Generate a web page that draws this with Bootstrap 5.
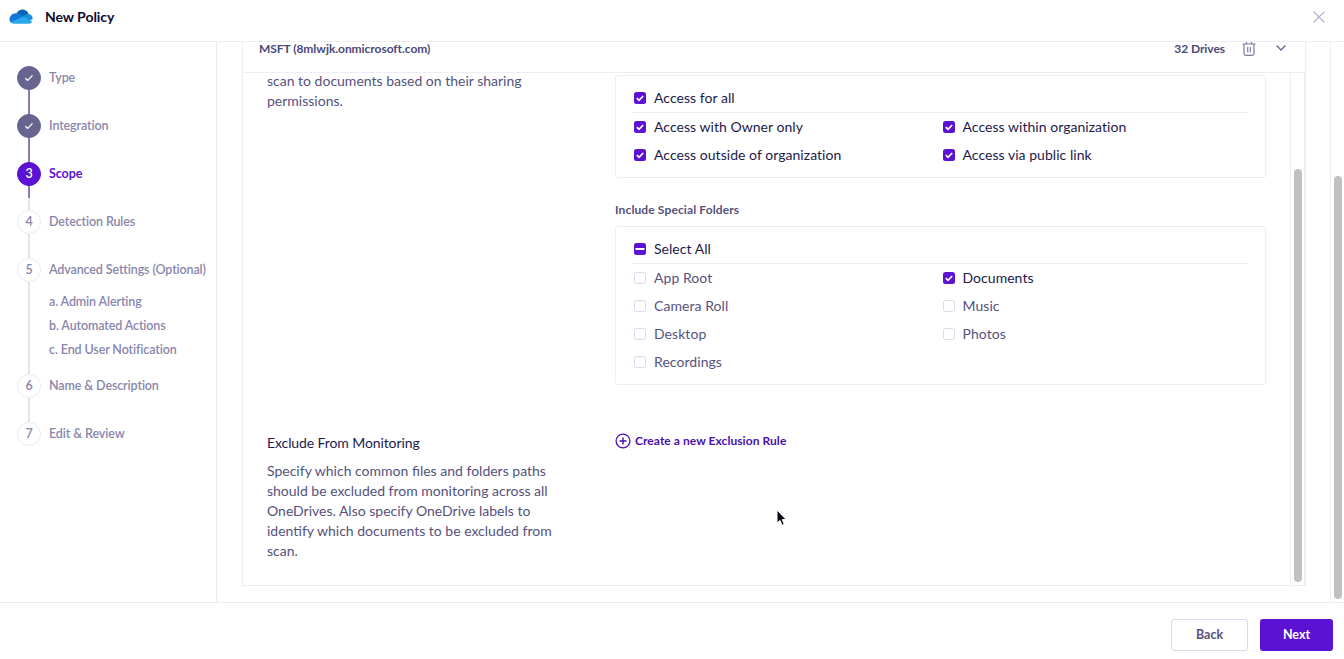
<!DOCTYPE html>
<html lang="en">
<head>
<meta charset="utf-8">
<meta name="viewport" content="width=device-width, initial-scale=1">
<title>New Policy</title>
<link href="https://cdn.jsdelivr.net/npm/bootstrap@5.3.0/dist/css/bootstrap.min.css" rel="stylesheet">
<style>
:root{--brand:#5b12d3;--ink:#1d1a4b;--mid:#55527d;--soft:#8986ab;--line:#ededf2}
body{font-family:Lato,"Liberation Sans",sans-serif;font-size:14px;line-height:20px;color:var(--mid);background:#fff}
.line-c{border-color:var(--line)!important}
.topbar{height:42px;padding:0 18px 7px 9px}
.topbar h1{font-size:14px;line-height:20px;font-weight:700;color:#0e0a33;margin-left:12px;letter-spacing:-.05px}
.side{width:217px;padding:24px 0 0 17px}
.side-in{border-right:1px solid #ececf3}
.rail{width:24px}
.dot{width:24px;height:24px;border-radius:50%;font-size:12.5px;font-weight:600;border:1px solid #ebebf2;color:var(--soft)}
.dot.done{background:#67658f;border-color:#67658f;color:#fff}
.dot.now{background:var(--brand);border-color:var(--brand);color:#fff}
.bar{width:2px;min-height:24px;background:#e2e1ec}
.bar.done{background:#8f78bd}
.bar.half{background:linear-gradient(#8f78bd 50%,#e2e1ec 50%)}
.step{margin-left:8px;font-size:12.5px;line-height:23px;font-weight:600;color:var(--soft);letter-spacing:-.12px;white-space:nowrap}
.step.now{color:var(--brand);font-weight:700;letter-spacing:-.1px}
.subs{padding:9px 0 12px}
.subs li{height:24px}
.pane{padding:0 24px 16px 25px}
.panel{border:1px solid var(--line);border-top:0}
.phead{height:31px;padding:0 16px 18px 16px;font-size:12px;line-height:13px;font-weight:700;color:#4c4978;letter-spacing:-.05px}
.pbody{padding:0 0 0 24px}
.lcol{width:348px}
.lcol p{width:300px;margin:0}
.clip{margin-top:-2px!important}
.ttl{color:var(--ink);letter-spacing:-.1px}
.box{width:651px;border:1px solid var(--line);border-radius:3px;padding:8px 16px 8px}
.box .all{height:29px;border-bottom:1px solid var(--line)}
.opt{height:28px;color:var(--mid);letter-spacing:.06px;padding-left:2px}
.opt.on{color:var(--ink);letter-spacing:.04px}
.cb{width:12px;height:12px;border:1px solid #dcdaea;border-radius:2.5px;margin-right:8px;flex:none}
.opt.on .cb{background:var(--brand);border:0}
.ftitle{font-size:12px;font-weight:700;color:var(--mid);letter-spacing:.12px}
.link-new{color:#4a0fb0;font-size:12px;font-weight:700;letter-spacing:.06px;margin-top:-2px}
.track{width:15px;border:1px solid var(--line);border-width:0 1px;padding:0 0 3px 3px}
.outer{width:14px}
.thumb{width:8px;border-radius:4px;background:#c1c1c1}
.foot{height:57px;border-top:1px solid var(--line);padding:0 11px 8px 0;gap:12px}
.foot .btn{height:32px;padding:0 0 1px;font-size:12.5px;line-height:20px;font-weight:700;border-radius:3px}
.foot .btn-back{width:77px;border:1px solid #d9d8e8;color:var(--mid)}
.btn-next,.btn-next:hover{width:73px;background:var(--brand);color:#fff}
.chev{margin:2px 3px 0 19px}
.pointer{position:absolute;left:773px;top:508px}
</style>
</head>
<body class="vh-100 overflow-hidden d-flex flex-column">
<svg class="d-none"><symbol id="ck" viewBox="0 0 12 12"><path d="M2.800 6.200l2.200 2.100 4.200-4.300" fill="none" stroke="#fff" stroke-width="1.700"/></symbol>
<symbol id="tick" viewBox="0 0 10 10"><path d="M1.400 5.200l2.300 2.200 4.800-5" fill="none" stroke="#fff" stroke-width="1.300"/></symbol></svg>
<header class="topbar d-flex align-items-center border-bottom line-c flex-shrink-0">
<svg width="24" height="16" viewBox="0 0 24 16"><path d="M7.5 4.500C9 1.400 11.400.3 14 .5c2.700.2 4.900 2 5.700 4.700L13 9z" fill="#0364b8"/><path d="M7.300 4.200c2 0 3.200.7 4.700 1.600L18 10 2.500 14C.2 12.700-.1 9.500 1.400 7.200c1.300-2 3.300-3.100 5.900-3z" fill="#0f78d4"/><path d="M14.500 7.500c1.200-1.500 3-2.400 5-2.400 2.500.2 4.200 2.200 4.200 4.900L20 12z" fill="#1490df"/><path d="M1.500 13.100L14.600 7.400l8.600 5.200c-.8 1.500-2 2.200-3.600 2.200H5c-1.500 0-2.700-.6-3.500-1.700z" fill="#28a8ea"/></svg>
<h1 class="mb-0 me-auto">New Policy</h1>
<svg width="14" height="14" viewBox="0 0 14 14"><path d="M1.500 1.500l11 11m0-11l-11 11" stroke="#b9b6d3" stroke-width="1.300" fill="none"/></svg>
</header>
<div class="d-flex flex-grow-1 overflow-hidden">
<nav class="side side-in flex-shrink-0">
<div class="d-flex"><div class="rail d-flex flex-column align-items-center"><div class="dot done d-flex align-items-center justify-content-center"><svg width="10" height="10"><use href="#tick"/></svg></div><div class="bar done flex-grow-1"></div></div><div class="step">Type</div></div>
<div class="d-flex"><div class="rail d-flex flex-column align-items-center"><div class="dot done d-flex align-items-center justify-content-center"><svg width="10" height="10"><use href="#tick"/></svg></div><div class="bar done flex-grow-1"></div></div><div class="step">Integration</div></div>
<div class="d-flex"><div class="rail d-flex flex-column align-items-center"><div class="dot now d-flex align-items-center justify-content-center">3</div><div class="bar half flex-grow-1"></div></div><div class="step now">Scope</div></div>
<div class="d-flex"><div class="rail d-flex flex-column align-items-center"><div class="dot d-flex align-items-center justify-content-center">4</div><div class="bar flex-grow-1"></div></div><div class="step">Detection Rules</div></div>
<div class="d-flex"><div class="rail d-flex flex-column align-items-center"><div class="dot d-flex align-items-center justify-content-center">5</div><div class="bar flex-grow-1"></div></div><div class="step">Advanced Settings (Optional)<ul class="subs list-unstyled mb-0"><li>a. Admin Alerting</li><li>b. Automated Actions</li><li>c. End User Notification</li></ul></div></div>
<div class="d-flex"><div class="rail d-flex flex-column align-items-center"><div class="dot d-flex align-items-center justify-content-center">6</div><div class="bar flex-grow-1"></div></div><div class="step">Name &amp; Description</div></div>
<div class="d-flex"><div class="rail d-flex flex-column align-items-center"><div class="dot d-flex align-items-center justify-content-center">7</div></div><div class="step">Edit &amp; Review</div></div>
</nav>
<main class="pane flex-grow-1 d-flex">
<section class="panel flex-grow-1 d-flex flex-column">
<div class="phead d-flex align-items-start border-bottom line-c flex-shrink-0"><span class="me-auto">MSFT (8mlwjk.onmicrosoft.com)</span><span>32 Drives</span>
<svg class="ms-3" width="16" height="15" viewBox="0 0 16 15"><path d="M1.500 2h13M5.500 1.800V0m5 1.800V0M3 2v9.500q0 1.800 1.800 1.800h6.400q1.800 0 1.800-1.800V2M6.700 4.900v5.400m2.600-5.400v5.400" stroke="#7e7ba3" stroke-width="1.200" fill="none"/></svg>
<svg class="chev" width="10" height="8" viewBox="0 0 10 8"><path d="M.6 1.500L5 6l4.400-4.500" stroke="#68658f" stroke-width="1.300" fill="none"/></svg></div>
<div class="d-flex flex-grow-1 overflow-hidden">
<div class="pbody flex-grow-1">
<div class="d-flex" style="height:360px"><div class="lcol flex-shrink-0"><p class="clip">scan to documents based on their sharing permissions.</p></div>
<div>
<div class="box" style="margin-top:2px;height:103px"><div class="all opt on d-flex align-items-center"><span class="cb d-flex"><svg width="12" height="12"><use href="#ck"/></svg></span>Access for all</div>
<div class="row g-0"><div class="col-6"><div class="opt on d-flex align-items-center"><span class="cb d-flex"><svg width="12" height="12"><use href="#ck"/></svg></span>Access with Owner only</div><div class="opt on d-flex align-items-center"><span class="cb d-flex"><svg width="12" height="12"><use href="#ck"/></svg></span>Access outside of organization</div></div>
<div class="col-6"><div class="opt on d-flex align-items-center"><span class="cb d-flex"><svg width="12" height="12"><use href="#ck"/></svg></span>Access within organization</div><div class="opt on d-flex align-items-center"><span class="cb d-flex"><svg width="12" height="12"><use href="#ck"/></svg></span>Access via public link</div></div></div></div>
<div class="ftitle" style="margin:22px 0 6px">Include Special Folders</div>
<div class="box" style="height:159px"><div class="all opt on d-flex align-items-center"><span class="cb d-flex"><svg width="12" height="12"><path d="M1.500 6h9" stroke="#fff" stroke-width="2"/></svg></span>Select All</div>
<div class="row g-0"><div class="col-6"><div class="opt d-flex align-items-center"><span class="cb"></span>App Root</div><div class="opt d-flex align-items-center"><span class="cb"></span>Camera Roll</div><div class="opt d-flex align-items-center"><span class="cb"></span>Desktop</div><div class="opt d-flex align-items-center"><span class="cb"></span>Recordings</div></div>
<div class="col-6"><div class="opt on d-flex align-items-center"><span class="cb d-flex"><svg width="12" height="12"><use href="#ck"/></svg></span>Documents</div><div class="opt d-flex align-items-center"><span class="cb"></span>Music</div><div class="opt d-flex align-items-center"><span class="cb"></span>Photos</div></div></div></div>
</div></div>
<div class="d-flex"><div class="lcol flex-shrink-0"><div class="ttl mb-2">Exclude From Monitoring</div><p>Specify which common files and folders paths should be excluded from monitoring across all OneDrives. Also specify OneDrive labels to identify which documents to be excluded from scan.</p></div>
<a href="#" class="link-new d-flex align-items-center align-self-start text-decoration-none"><svg width="16" height="16" viewBox="0 0 16 16"><circle cx="8" cy="8" r="6.900" fill="none" stroke="currentColor" stroke-width="1.300"/><path d="M8 4.500v7M4.500 8h7" stroke="currentColor" stroke-width="1.400"/></svg><span class="ms-1">Create a new Exclusion Rule</span></a></div>
</div>
<div class="track d-flex align-items-end flex-shrink-0"><div class="thumb" style="height:413px"></div></div>
</div>
</section>
</main>
<div class="track outer border-end-0 d-flex align-items-end flex-shrink-0"><div class="thumb" style="height:423px"></div></div>
</div>
<footer class="foot d-flex align-items-start justify-content-end flex-shrink-0 pt-3"><button class="btn btn-back">Back</button><button class="btn btn-next">Next</button></footer>
<svg class="pointer" width="16" height="20" viewBox="0 0 16 20"><path d="M4 2v13.200l3-2.800 2.100 4.900 2.200-1-2.100-4.700h4z" fill="#080814" stroke="#fff" stroke-width="1"/></svg>
</body>
</html>
